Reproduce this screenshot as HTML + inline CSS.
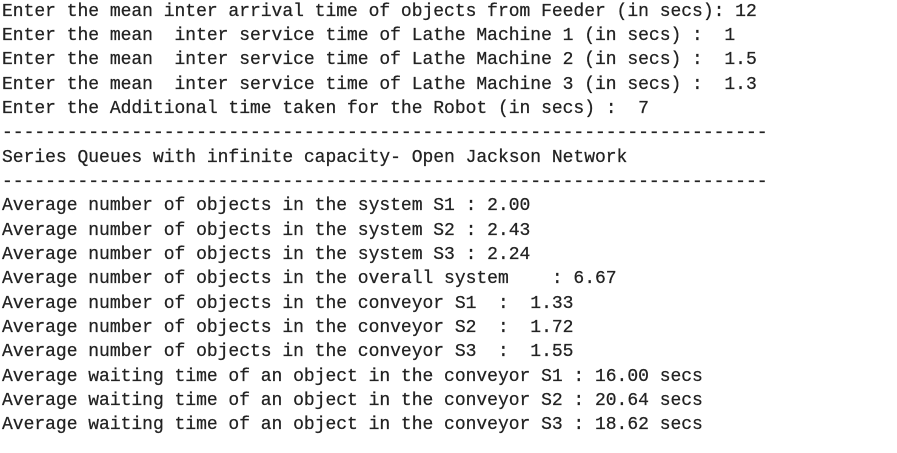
<!DOCTYPE html>
<html><head><style>
html,body{margin:0;padding:0;background:#fff;width:897px;height:453px;overflow:hidden}
pre{margin:0;position:absolute;left:2px;top:-0.5px;font-family:"Liberation Mono",monospace;font-size:18px;line-height:24.35px;color:#222;letter-spacing:-0.02px;-webkit-text-stroke:0.25px #222}
</style></head><body>
<pre>Enter the mean inter arrival time of objects from Feeder (in secs): 12
Enter the mean  inter service time of Lathe Machine 1 (in secs) :  1
Enter the mean  inter service time of Lathe Machine 2 (in secs) :  1.5
Enter the mean  inter service time of Lathe Machine 3 (in secs) :  1.3
Enter the Additional time taken for the Robot (in secs) :  7
-----------------------------------------------------------------------
Series Queues with infinite capacity- Open Jackson Network
-----------------------------------------------------------------------
Average number of objects in the system S1 : 2.00
Average number of objects in the system S2 : 2.43
Average number of objects in the system S3 : 2.24
Average number of objects in the overall system    : 6.67
Average number of objects in the conveyor S1  :  1.33
Average number of objects in the conveyor S2  :  1.72
Average number of objects in the conveyor S3  :  1.55
Average waiting time of an object in the conveyor S1 : 16.00 secs
Average waiting time of an object in the conveyor S2 : 20.64 secs
Average waiting time of an object in the conveyor S3 : 18.62 secs</pre>
</body></html>
